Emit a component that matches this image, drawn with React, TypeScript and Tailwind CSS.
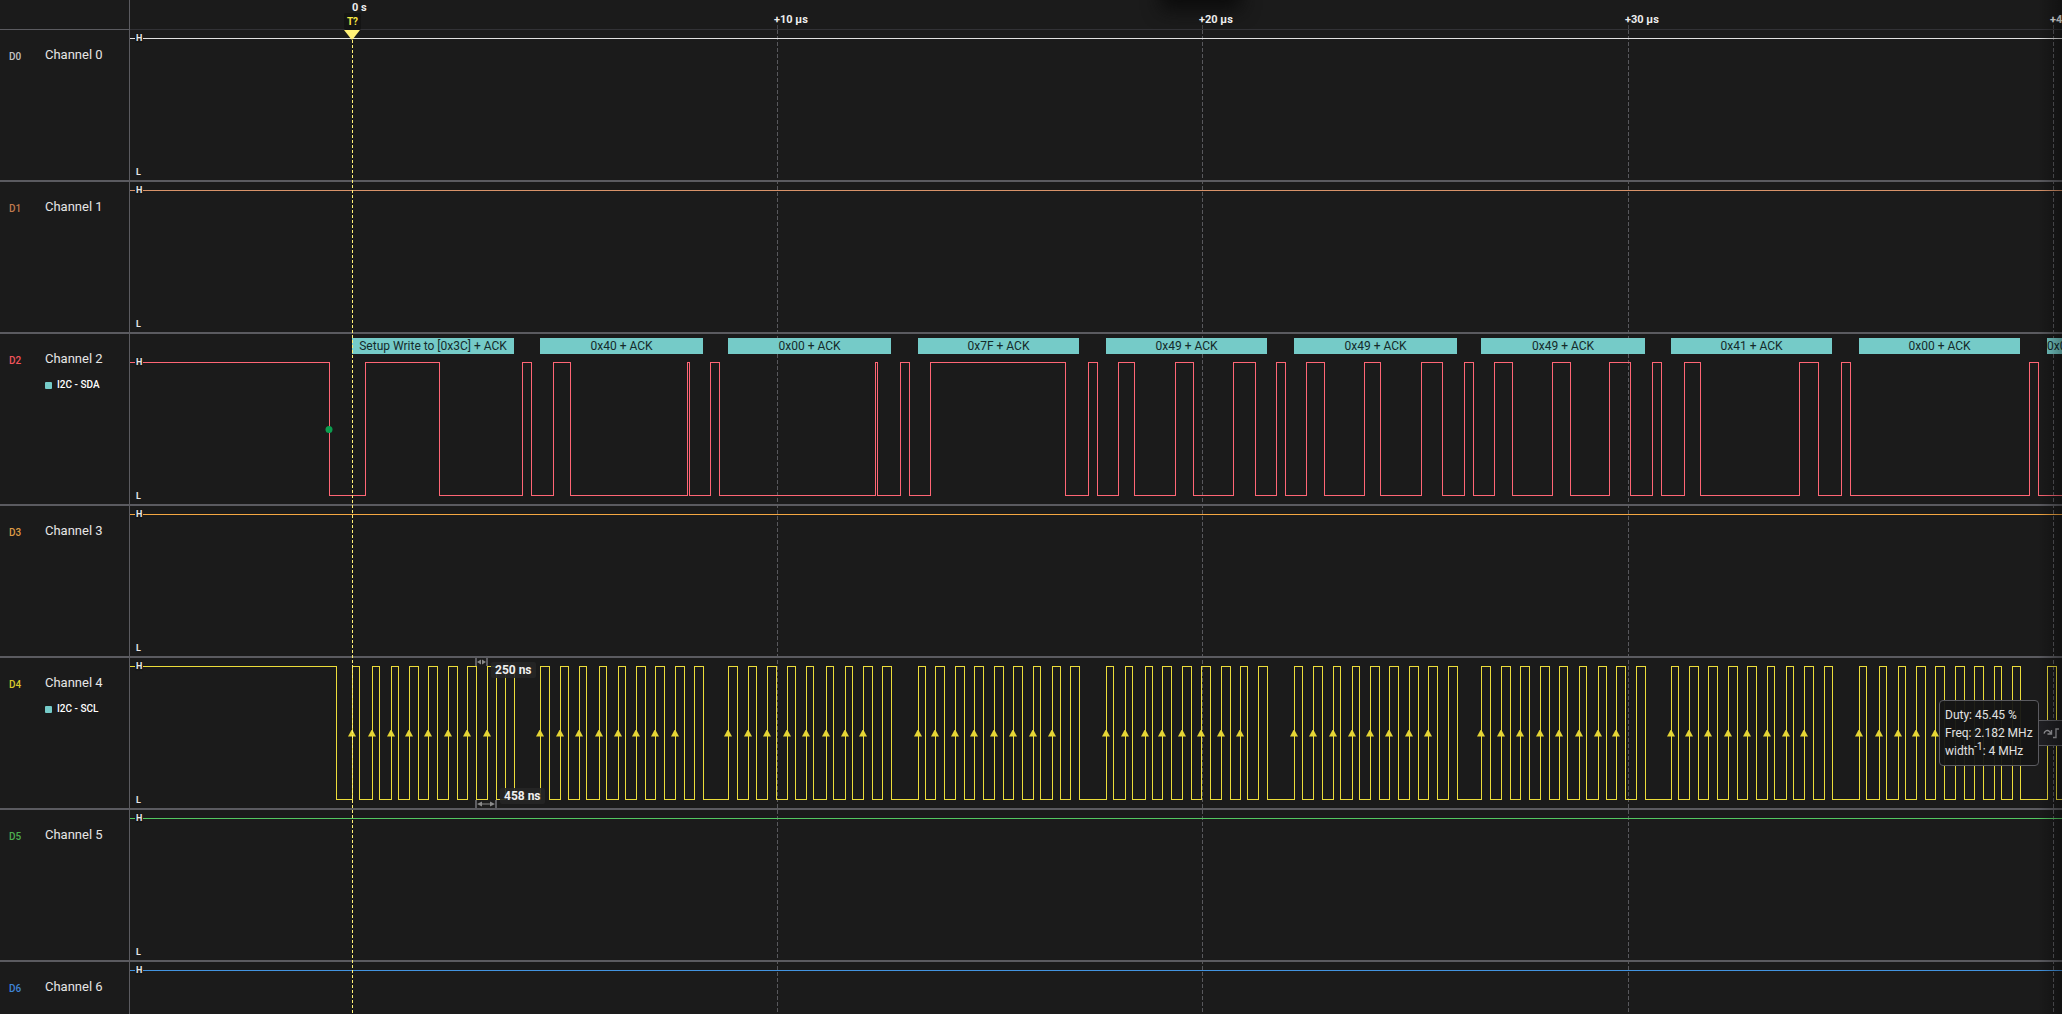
import React from 'react';

interface Byte {
	start: number;
	end: number;
	text: string;
}

interface Channel {
	id: string;
	name: string;
	color: string;
	idClass: string;
	analyzer?: string;
	edges: number[];
	bytes?: Byte[];
	triggers?: number[];
}

const HIGH = 8.5;
const LOW = 141.5;

// Edge positions along the time axis; every signal idles high.
const SDA_EDGES = [
	199, 235, 309, 392, 401, 423, 440, 557, 559, 580, 589, 745, 747, 770, 779, 800, 935, 958, 967, 988, 1004,
	1045, 1063, 1103, 1125, 1146, 1155, 1176, 1194, 1234, 1250, 1291, 1312, 1334, 1343, 1364, 1382, 1422, 1440,
	1479, 1500, 1522, 1531, 1554, 1570, 1669, 1688, 1711, 1720, 1899, 1908,
];

// Clock pulses as [rise, fall], nine per byte.
const SCL_PULSES = [
	[[222, 229], [242, 249], [261, 268], [279, 288], [298, 307], [318, 327], [337, 346], [357, 366], [375, 384]],
	[[410, 419], [430, 438], [449, 456], [469, 476], [488, 495], [506, 515], [525, 534], [545, 554], [564, 573]],
	[[598, 607], [618, 626], [637, 646], [657, 665], [676, 683], [696, 703], [715, 722], [733, 742], [752, 761]],
	[[788, 795], [805, 814], [825, 834], [844, 853], [864, 873], [883, 892], [903, 910], [922, 930], [940, 949]],
	[[976, 983], [995, 1002], [1015, 1022], [1032, 1041], [1052, 1061], [1071, 1080], [1091, 1100], [1110, 1117], [1128, 1137]],
	[[1164, 1172], [1183, 1192], [1203, 1210], [1222, 1229], [1240, 1249], [1259, 1268], [1279, 1288], [1298, 1307], [1318, 1327]],
	[[1351, 1360], [1371, 1380], [1390, 1399], [1410, 1419], [1429, 1437], [1449, 1456], [1468, 1476], [1486, 1495], [1506, 1515]],
	[[1541, 1548], [1559, 1568], [1578, 1587], [1598, 1607], [1617, 1626], [1637, 1644], [1656, 1663], [1674, 1683], [1694, 1702]],
	[[1729, 1736], [1749, 1756], [1768, 1775], [1786, 1795], [1805, 1814], [1825, 1834], [1844, 1853], [1864, 1871], [1882, 1890]],
	[[1917, 1926]],
];

const SCL_EDGES = [206, ...SCL_PULSES.flat(2)];
const SCL_TRIGGERS = SCL_PULSES.flatMap((pulses) => pulses.slice(0, 8).map(([rise]) => rise)).filter((x) => x < 1900);

const BYTES: Byte[] = [
	{ start: 222, end: 384, text: 'Setup Write to [0x3C] + ACK' },
	{ start: 410, end: 573, text: '0x40 + ACK' },
	{ start: 598, end: 761, text: '0x00 + ACK' },
	{ start: 788, end: 949, text: '0x7F + ACK' },
	{ start: 976, end: 1137, text: '0x49 + ACK' },
	{ start: 1164, end: 1327, text: '0x49 + ACK' },
	{ start: 1351, end: 1515, text: '0x49 + ACK' },
	{ start: 1541, end: 1702, text: '0x41 + ACK' },
	{ start: 1729, end: 1890, text: '0x00 + ACK' },
	{ start: 1917, end: 1980, text: '0x00' },
];

const CHANNELS: Channel[] = [
	{ id: 'D0', name: 'Channel 0', color: '#e2e2e2', idClass: 'text-[#c4c4c4]', edges: [] },
	{ id: 'D1', name: 'Channel 1', color: '#d8936a', idClass: 'text-[#c07a4e]', edges: [] },
	{ id: 'D2', name: 'Channel 2', color: '#ff6675', idClass: 'text-[#f2545b]', analyzer: 'I2C - SDA', edges: SDA_EDGES, bytes: BYTES },
	{ id: 'D3', name: 'Channel 3', color: '#f5a742', idClass: 'text-[#dd9a45]', edges: [] },
	{ id: 'D4', name: 'Channel 4', color: '#ecdc3a', idClass: 'text-[#d8c92c]', analyzer: 'I2C - SCL', edges: SCL_EDGES, triggers: SCL_TRIGGERS },
	{ id: 'D5', name: 'Channel 5', color: '#52c760', idClass: 'text-[#4caf50]', edges: [] },
	{ id: 'D6', name: 'Channel 6', color: '#4394e0', idClass: 'text-[#3f84d6]', edges: [] },
];

const TICKS = [
	{ x: 647, label: '+10 µs' },
	{ x: 1072, label: '+20 µs' },
	{ x: 1498, label: '+30 µs' },
	{ x: 1923, label: '+40 µs' },
];

const CURSOR_X = 222;

const buildPath = (edges: number[]) => {
	let level = HIGH;
	let d = `M0 ${HIGH}`;
	edges.forEach((x) => {
		level = level === HIGH ? LOW : HIGH;
		d += `H${x + 0.5}V${level}`;
	});
	return `${d}H4000`;
};

const TimeRuler: React.FC = () => (
	<header className="flex h-[30px] shrink-0 text-[11px] leading-4 font-bold text-[#ededed]">
		<div className="w-[130px] shrink-0 border-r border-b border-[#5b5b60]" />
		<div className="relative min-w-0 flex-1 overflow-hidden border-b border-[#323236]">
			<div className="absolute -top-5 left-[1043px] h-4 w-14 shadow-[0_2px_18px_12px_#0c0c0c]" />
			<p className="pl-[222px]">0 s</p>
			{TICKS.map((tick) => (
				<span key={tick.label} className="absolute top-3 -ml-[3px] whitespace-nowrap" style={{ left: tick.x }}>
					{tick.label}
				</span>
			))}
		</div>
	</header>
);

const Grid: React.FC = () => (
	<svg className="h-full w-full" shapeRendering="crispEdges">
		{TICKS.map((tick) => (
			<g key={tick.label} stroke="#58585c">
				<line x1={tick.x + 0.5} x2={tick.x + 0.5} y1="25" y2="30" stroke="#444448" />
				<line x1={tick.x + 0.5} x2={tick.x + 0.5} y1="30" y2="100%" strokeDasharray="4 2" />
			</g>
		))}
	</svg>
);

const Cursor: React.FC = () => (
	<svg className="h-full w-full font-bold">
		<line
			x1={CURSOR_X + 0.5}
			x2={CURSOR_X + 0.5}
			y1="40"
			y2="100%"
			stroke="#fff176"
			strokeDasharray="3 2"
			shapeRendering="crispEdges"
		/>
		<path d="M214 30H230L222.5 39.5H221.5Z" fill="#fff176" />
		<rect x="214" y="13" width="17" height="17" rx="2" fill="#141414" />
		<text x="222.5" y="25" textAnchor="middle" fontSize="10" fill="#f5e642">
			T?
		</text>
	</svg>
);

const LevelMarks: React.FC = () => (
	<div className="absolute inset-y-0 left-0 flex flex-col justify-between py-[3px] pl-[5px] text-[9px] leading-[10px] font-bold text-[#e6e6e6]">
		<span className="rounded-xs bg-[#171717] px-px">H</span>
		<span className="rounded-xs px-px">L</span>
	</div>
);

const Measurements: React.FC = () => (
	<>
		<svg className="absolute inset-0 h-full w-full" fill="#8a8a8a" stroke="none">
			<path d="M345 0h2v8h-2zM356 0h2v8h-2zM345 142h2v8h-2zM365 142h2v8h-2z" fill="#5f5f63" />
			<path d="M347 4l4-2.5v2h1v1h-1v2zM356 4l-4-2.5v2h-1v1h1v2z" />
			<path d="M347 146l5-2.5v2h8v-2l5 2.5l-5 2.5v-2h-8v2z" />
		</svg>
		<div className="absolute inset-y-0 left-0 flex flex-col items-start justify-between pt-1 pb-1 pl-[361px] text-xs leading-4 font-bold whitespace-nowrap text-[#f0f0f0]">
			<span className="rounded-xs bg-[#262626]/90 px-1">250 ns</span>
			<span className="ml-[9px] rounded-xs bg-[#262626]/90 px-1">458 ns</span>
		</div>
	</>
);

const PulseTooltip: React.FC = () => (
	<div className="absolute inset-y-0 left-[1809px] flex items-center">
		<div className="rounded border border-[#5b5b60] bg-[#151515]/95 px-[5px] py-[5px] text-xs leading-[18px] whitespace-nowrap text-[#e2e2e2]">
			<p>Duty: 45.45 %</p>
			<p>Freq: 2.182 MHz</p>
			<p>
				width<sup className="text-[10px]">-1</sup>: 4 MHz
			</p>
		</div>
		<button
			type="button"
			aria-label="Measurement settings"
			className="flex h-[26px] w-10 items-center border border-l-0 border-[#5b5b60] bg-[#202024] pl-1"
		>
			<svg width="17" height="12" viewBox="0 0 17 12" fill="none" stroke="#9a9a9f" strokeWidth="1.4">
				<path d="M1 6.5C2 3.5 4.5 2.5 6.5 4.5L8 6.5M8.5 3V7H4.5" />
				<path d="M10 10.5H13V2H16" />
			</svg>
		</button>
	</div>
);

const ByteTrack: React.FC<{ bytes: Byte[] }> = ({ bytes }) => (
	<div className="flex pt-1 text-center text-xs leading-4 whitespace-nowrap text-[#142a2a]">
		{bytes.map((byte, i) => (
			<div
				key={byte.start}
				className="shrink-0 overflow-hidden bg-[#75cbc8] last:text-left"
				style={{ marginLeft: byte.start - (bytes[i - 1]?.end ?? 0), width: byte.end - byte.start }}
			>
				{byte.text}
			</div>
		))}
	</div>
);

const ChannelRow: React.FC<{ channel: Channel }> = ({ channel }) => (
	<section className="flex shrink-0 border-b-2 border-[#5b5b60]">
		<div className="flex w-[130px] shrink-0 border-r border-[#5b5b60] pl-[9px]">
			<span className={`w-9 shrink-0 pt-[19px] text-[10px] leading-4 font-medium ${channel.idClass}`}>{channel.id}</span>
			<div className="pt-[17px]">
				<h2 className="text-[13px] leading-4 text-[#e6e6e6]">{channel.name}</h2>
				{channel.analyzer && (
					<p className="mt-2.5 flex items-center gap-[5px] text-[10px] leading-4 font-medium text-white">
						<i className="h-[7px] w-[7px] rounded-[1px] bg-[#75cbc8]" />
						{channel.analyzer}
					</p>
				)}
			</div>
		</div>
		<div className="min-w-0 flex-1 overflow-hidden">
			{channel.bytes && <ByteTrack bytes={channel.bytes} />}
			<div className="relative">
				<svg className="block w-full" height="150">
					<path d={buildPath(channel.edges)} fill="none" stroke={channel.color} shapeRendering="crispEdges" />
					{channel.triggers?.map((x) => (
						<path key={x} d={`M${x - 0.5} 72h1l3.5 6.5h-8z`} fill="#e6d635" />
					))}
					{channel.bytes && <circle cx="199" cy="75.5" r="3.5" fill="#0c9d4f" />}
				</svg>
				<LevelMarks />
				{channel.triggers && <Measurements />}
				{channel.triggers && <PulseTooltip />}
			</div>
		</div>
	</section>
);

export default function App() {
	return (
		<main className="relative flex h-screen flex-col overflow-hidden bg-[#1b1b1b] font-[Roboto,sans-serif]">
			<div className="pointer-events-none absolute inset-0 pl-[130px]">
				<Grid />
			</div>
			<TimeRuler />
			<div className="relative flex flex-col">
				{CHANNELS.map((channel) => (
					<ChannelRow key={channel.id} channel={channel} />
				))}
			</div>
			<div className="pointer-events-none absolute inset-0 pl-[130px]">
				<Cursor />
			</div>
			<div className="pointer-events-none absolute inset-y-0 right-0 w-6 bg-linear-to-r from-transparent to-black/35" />
		</main>
	);
}
